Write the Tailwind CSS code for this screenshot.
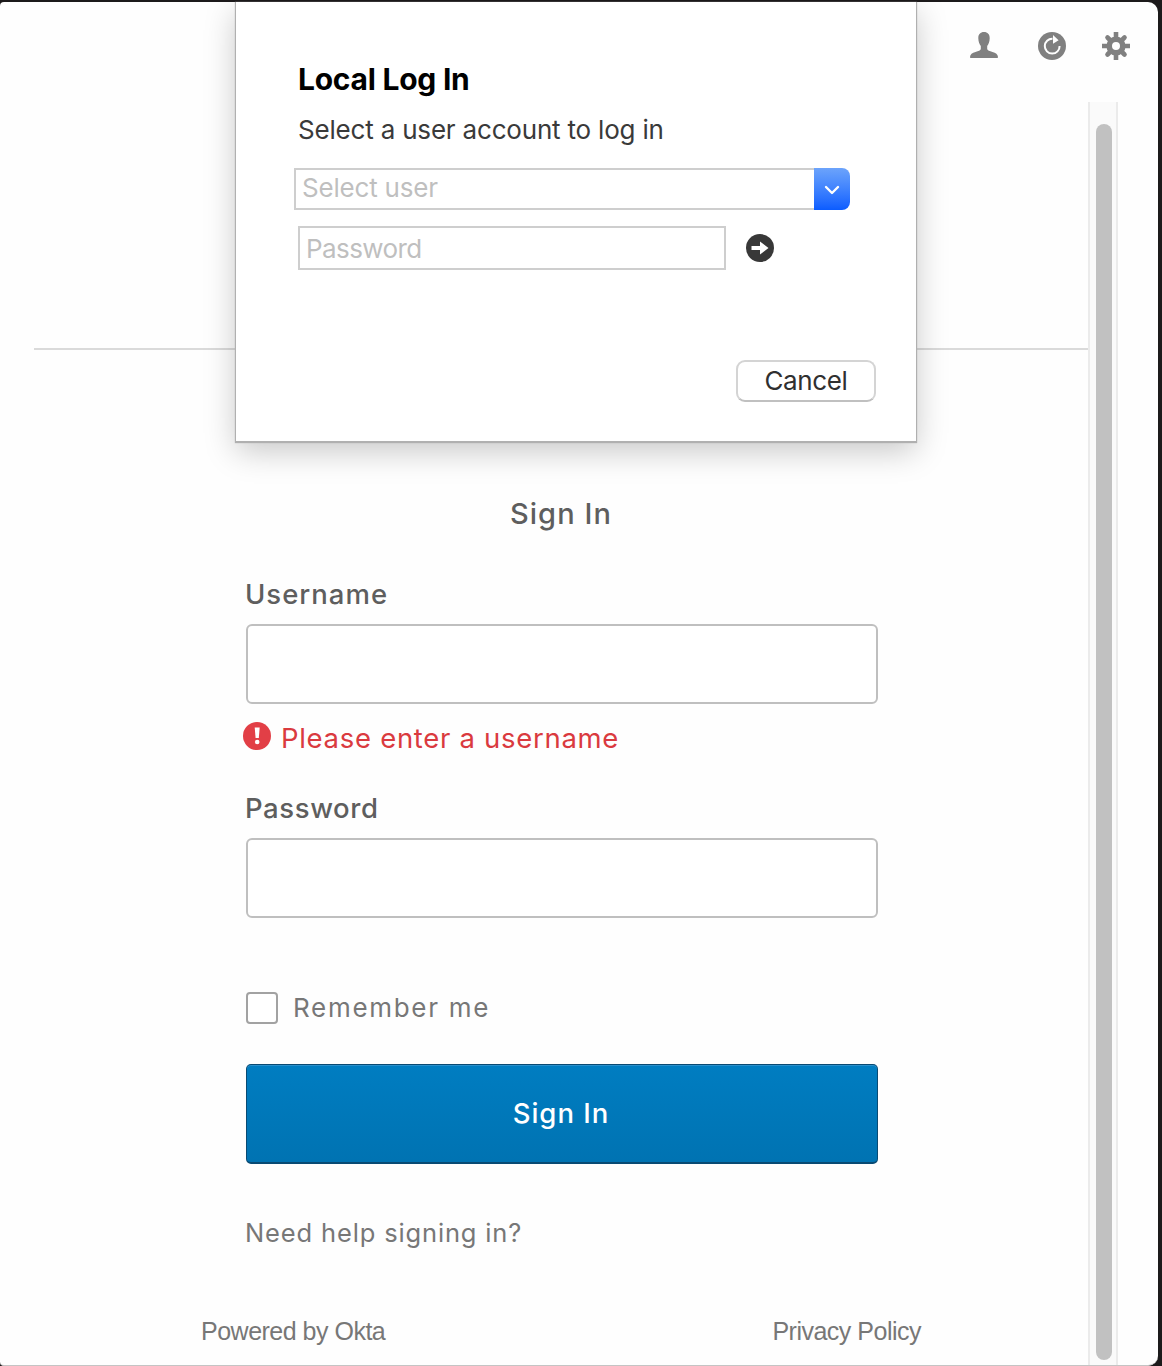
<!DOCTYPE html>
<html lang="en">
<head>
<meta charset="utf-8">
<title>Sign In</title>
<script src="https://cdn.jsdelivr.net/npm/@tailwindcss/browser@4"></script>
</head>
<body class="h-[1366px] w-[1162px] overflow-hidden bg-[#1c1a1b] font-['Inter',sans-serif]">
<div class="relative flex h-full flex-col pt-[2px] pr-[4px]">
  <main class="flex flex-1 flex-col overflow-hidden rounded-tl-[4px] rounded-tr-[10px] rounded-br-[10px] rounded-bl-[4px] border-b border-[#c4c4c4] bg-[#fefefe]">
    <header class="flex h-[100px] shrink-0 items-start justify-end gap-[40px] pt-[30px] pr-[28px] text-[#808080]">
      <svg class="h-[28px] w-[28px]" viewBox="0 0 28 28" fill="currentColor"><path d="M14 0c3.600 0 5.800 2.300 5.700 6.200-.1 3.400-1.100 6-2.500 7.700v3.100c.3 1.500 2.300 2 5.300 2.900 3.300 1 5.300 2.200 5.500 5.100 0 .7-.4 1-1 1H1c-.6 0-1-.3-1-1 .2-2.900 2.200-4.100 5.500-5.100 3-.9 5-1.400 5.300-2.900v-3.100C9.400 12.200 8.400 9.600 8.300 6.200 8.200 2.300 10.400 0 14 0z"/></svg>
      <svg class="h-[28px] w-[28px]" viewBox="0 0 28 28"><circle cx="14" cy="14" r="14" fill="currentColor"/><path d="M14.500 6.800A7.400 7.400 0 1 0 21.600 14" fill="none" stroke="#fefefe" stroke-width="2"/><path d="M15 3l5.600 5.200-5.600 3.600z" fill="#fefefe"/></svg>
      <svg class="-ml-[4px] h-[28px] w-[28px]" viewBox="-14 -14 28 28"><g stroke="currentColor" stroke-width="4.600" stroke-linecap="butt"><path d="M0-14V-6M0 14V6M-14 0H-6M14 0H6"/><path d="M-8.500-8.500L-5-5M8.500 8.500L5 5M-8.500 8.500L-5 5M8.500-8.500L5-5" stroke-linecap="round"/></g><circle r="6.800" fill="none" stroke="currentColor" stroke-width="5.600"/></svg>
    </header>
    <div class="flex flex-1 pr-[40px] pl-[34px]">
      <section class="flex flex-1 flex-col">
        <div class="h-[248px] border-b-2 border-[#dadada]"></div>
        <form class="ml-[212px] flex w-[632px] flex-col text-[#5e5e5e]">
          <h1 class="mt-[143px] h-[40px] pr-[2px] text-center text-[29px] leading-[41px] font-medium tracking-[1.100px]">Sign In</h1>
          <label class="mt-[41px] -ml-[1px] h-[40px] text-[27.500px] leading-[40px] font-medium tracking-[1px]">Username</label>
          <div class="mt-[10px] h-[80px] rounded-[6px] border-2 border-[#bfbfbf] bg-white"></div>
          <div class="mt-[14px] -ml-[3px] flex h-[40px] text-[27.500px] leading-[40px] tracking-[0.700px] text-[#da3a3f]">
            <svg class="mt-[4px] mr-[10px] h-[28px] w-[28px]" viewBox="0 0 28 28"><circle cx="14" cy="14" r="14" fill="#e23f46"/><path d="M11.700 5.500h5l-.9 10.500h-3.200z" fill="#fff"/><circle cx="14.200" cy="20" r="2.300" fill="#fff"/></svg>
            <span>Please enter a username</span>
          </div>
          <label class="mt-[30px] -ml-[1px] h-[40px] text-[27.500px] leading-[40px] font-medium tracking-[0.600px]">Password</label>
          <div class="mt-[10px] h-[80px] rounded-[6px] border-2 border-[#bfbfbf] bg-white"></div>
          <div class="mt-[70px] flex h-[40px] items-center gap-[15px] text-[26px] leading-[42px] tracking-[1.700px] text-[#777]">
            <div class="h-[32px] w-[32px] rounded-[4px] border-2 border-[#a2a2a2] bg-white"></div>
            <span>Remember me</span>
          </div>
          <button type="button" class="mt-[36px] h-[100px] rounded-[5px] border border-b-2 border-[#094a73] bg-linear-to-b from-[#007dc1] to-[#0073b2] pr-[2px] text-[27.500px] font-medium tracking-[1px] text-white shadow-[inset_0_1px_0_#2a8fcb]">Sign In</button>
          <a class="mt-[49px] -ml-[1px] h-[40px] text-[25.500px] leading-[40px] tracking-[0.850px] text-[#777]">Need help signing in?</a>
        </form>
        <footer class="mt-[58px] mr-[167px] ml-[167px] flex h-[40px] justify-between font-['Liberation_Sans',Arial,sans-serif] text-[25px] leading-[40px] tracking-[-0.500px] text-[#777]">
          <span>Powered by Okta</span>
          <span>Privacy Policy</span>
        </footer>
      </section>
      <aside class="flex w-[30px] border-x-2 border-[#ebebeb] bg-[#fafafa] pt-[22px] pr-[4px] pb-[5px] pl-[6px]">
        <div class="w-[16px] rounded-full bg-[#c1c1c1]"></div>
      </aside>
    </div>
  </main>

  <!-- Local login sheet over the page -->
  <div role="dialog" class="absolute top-[2px] left-[236px] flex h-[439px] w-[680px] flex-col bg-white text-[#3a3a3a] shadow-[0_1px_1px_1px_#b0b0b0,0_10px_30px_rgba(0,0,0,0.22)]">
    <h2 class="mt-[57px] ml-[62px] h-[40px] text-[30px] leading-[40px] font-bold tracking-[-0.250px] text-black">Local Log In</h2>
    <p class="mt-[10px] ml-[62px] h-[40px] text-[26px] leading-[41px] tracking-[-0.190px]">Select a user account to log in</p>
    <div class="mt-[19px] ml-[58px] flex h-[42px] w-[556px]">
      <div class="flex-1 border-2 border-r-0 border-[#cecece] pl-[6px] text-[26px] leading-[35px] tracking-[-0.200px] text-[#bfbfbf]">Select user</div>
      <div class="flex w-[36px] items-center justify-center rounded-r-[8px] bg-linear-to-b from-[#6ca3fb] to-[#0a5cff]">
        <svg class="mt-[2px] h-[10px] w-[16px]" viewBox="0 0 16 10" fill="none" stroke="#fff" stroke-width="2.400" stroke-linecap="round" stroke-linejoin="round"><path d="M2 2l6 6 6-6"/></svg>
      </div>
    </div>
    <div class="mt-[16px] ml-[62px] flex items-center gap-[20px]">
      <div class="h-[44px] w-[428px] border-2 border-[#cecece] pl-[6px] text-[26px] leading-[42px] tracking-[-0.600px] text-[#bfbfbf]">Password</div>
      <svg class="h-[28px] w-[28px]" viewBox="0 0 28 28"><circle cx="14" cy="14" r="14" fill="#383838"/><path d="M5.500 12H14V7.500L22.500 14 14 20.500V16H5.500z" fill="#fff"/></svg>
    </div>
    <button type="button" class="mt-[90px] ml-[500px] h-[42px] w-[140px] shrink-0 rounded-[9px] border-2 border-[#d4d4d4] border-b-[#c0c0c0] text-[26px] leading-[36px] tracking-[-0.350px] text-[#303030]">Cancel</button>
  </div>
</div>
</body>
</html>
